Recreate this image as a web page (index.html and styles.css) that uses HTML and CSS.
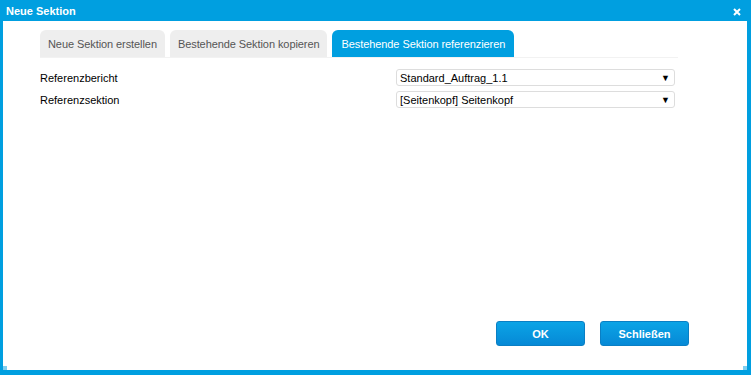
FILE: index.html
```html
<!DOCTYPE html>
<html lang="de">
<head>
    <meta charset="UTF-8">
    <meta name="viewport" content="width=device-width, initial-scale=1.0">
    <title>Neue Sektion</title>
    <link rel="stylesheet" href="styles.css">
</head>
<body>
    <div class="dialog">
        <div class="titlebar">
            <span class="title">Neue Sektion</span>
            <svg class="close" width="8" height="8" viewBox="0 0 8 8">
                <path d="M1 1 L7 7 M7 1 L1 7" stroke="#fff" stroke-width="2"/>
            </svg>
        </div>
        <div class="content">
            <div class="tabs">
                <div class="tab">Neue Sektion erstellen</div>
                <div class="tab">Bestehende Sektion kopieren</div>
                <div class="tab active">Bestehende Sektion referenzieren</div>
            </div>
            <div class="form">
                <div class="row">
                    <label>Referenzbericht</label>
                    <div class="select"><span>Standard_Auftrag_1.1</span><span class="arrow">&#9660;</span></div>
                </div>
                <div class="row">
                    <label>Referenzsektion</label>
                    <div class="select"><span>[Seitenkopf] Seitenkopf</span><span class="arrow">&#9660;</span></div>
                </div>
            </div>
            <div class="buttons">
                <button class="btn">OK</button>
                <button class="btn">Schließen</button>
            </div>
        </div>
        <span class="grip grip-left"></span>
        <span class="grip grip-right"></span>
    </div>
</body>
</html>
```
FILE: styles.css
```css
* {
    margin: 0;
    padding: 0;
    box-sizing: border-box;
}

body {
    font-family: 'Liberation Sans', Arial, sans-serif;
    font-size: 11px;
    background: #fff;
}

.dialog {
    position: relative;
    width: 751px;
    height: 375px;
    border: solid #009fe0;
    border-width: 0 4px 5px 3px;
    display: flex;
    flex-direction: column;
    background: #fff;
}

.titlebar {
    height: 21px;
    margin: 0 -4px 0 -3px;
    padding: 0 10px 0 6px;
    background: #009fe0;
    color: #fff;
    display: flex;
    align-items: center;
    justify-content: space-between;
}

.title {
    font-weight: bold;
    font-size: 11px;
}

.close {
    margin-top: 3px;
}

.content {
    flex: 1;
    display: flex;
    flex-direction: column;
    padding: 9px 0 0 37px;
}

.tabs {
    display: flex;
    gap: 5px;
    height: 28px;
    border-bottom: 1px solid #f2f2f2;
    width: 638px;
}

.tab {
    height: 27px;
    padding: 0 8px;
    background: #eeeeee;
    color: #555;
    border-radius: 6px 6px 0 0;
    display: flex;
    align-items: center;
    letter-spacing: -0.08px;
}

.tab.active {
    background: #009fe0;
    color: #fff;
    padding: 0 9px;
}

.form {
    margin-top: 11px;
    display: flex;
    flex-direction: column;
    gap: 5px;
}

.row {
    display: flex;
    align-items: center;
    height: 17px;
}

.row label {
    width: 356px;
    color: #000;
}

.select {
    width: 279px;
    height: 17px;
    border: 1px solid #ddd;
    border-radius: 3px;
    padding: 0 4px 0 3px;
    display: flex;
    align-items: center;
    justify-content: space-between;
    color: #000;
}

.arrow {
    font-size: 9px;
}

.buttons {
    margin-top: auto;
    margin-bottom: 24px;
    display: flex;
    gap: 15px;
    padding-left: 456px;
}

.btn {
    width: 89px;
    height: 25px;
    border: 1px solid #0a7fc4;
    border-radius: 3px;
    background: linear-gradient(#0ba4e6, #0689d6);
    color: #fff;
    font-family: 'Liberation Sans', Arial, sans-serif;
    font-size: 11px;
    font-weight: bold;
}

.grip {
    position: absolute;
    width: 4px;
    height: 4px;
    background: #7fcff0;
    bottom: 0;
}

.grip-left {
    left: 0;
}

.grip-right {
    right: 0;
}
```
